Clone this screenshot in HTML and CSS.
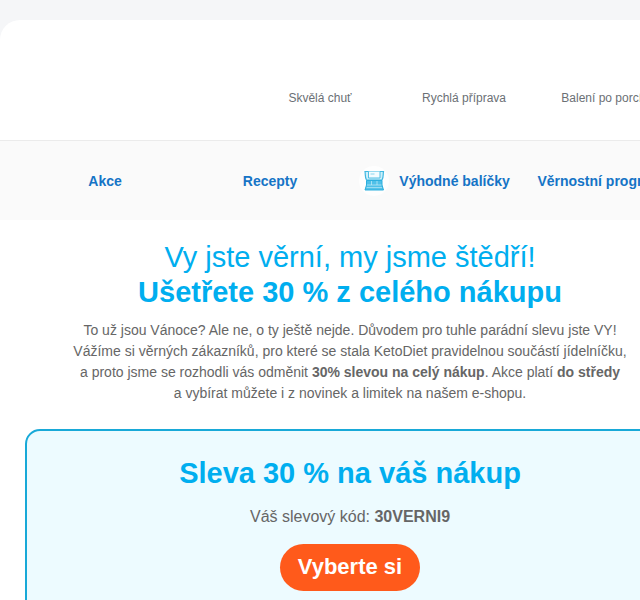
FILE: index.html
```html
<!DOCTYPE html>
<html lang="cs">
<head>
<meta charset="utf-8">
<title>KetoDiet</title>
<link rel="stylesheet" href="styles.css">
</head>
<body>
<div class="mail">
  <header class="header">
    <ul class="benefits">
      <li>Skvělá chuť</li>
      <li>Rychlá příprava</li>
      <li>Balení po porcích</li>
    </ul>
  </header>
  <nav class="nav">
    <a>Akce</a>
    <a>Recepty</a>
    <a class="packages">
      <svg class="icon" viewBox="0 0 30 30" width="30" height="30" aria-hidden="true">
        <circle cx="15" cy="15" r="15" fill="#fefefe"/>
        <path d="M6 5.500h18.500c-.6 3 .3 5.500-1.500 8.500H7.500C5.700 11 6.600 8.500 6 5.500z" fill="#cdeffa" stroke="#3fb8e1" stroke-width="1.200"/>
        <path d="M9.500 5.500v6.500h11.500v-6.500" fill="#f3fcff" stroke="#4fbfe4"/>
        <path d="M11.500 8h4" fill="none" stroke="#8ad6ee"/>
        <path d="M7.500 14.500H23V19l1.500 5H6l1.500-5z" fill="#4fc0e8" stroke="#2cafde"/>
        <path d="M8 19H22.500M7.500 21.600h15.500M12.500 15v4M18 15v4" fill="none" stroke="#c5ecf8" stroke-width=".7"/>
      </svg>
      <span>Výhodné balíčky</span>
    </a>
    <a>Věrnostní program</a>
  </nav>
  <main>
    <section class="intro">
      <h1>Vy jste věrní, my jsme štědří!<br><strong>Ušetřete 30 % z celého nákupu</strong></h1>
      <p>To už jsou Vánoce? Ale ne, o ty ještě nejde. Důvodem pro tuhle parádní slevu jste VY!<br>
      Vážíme si věrných zákazníků, pro které se stala KetoDiet pravidelnou součástí jídelníčku,<br>
      a proto jsme se rozhodli vás odměnit <strong>30% slevou na celý nákup</strong>. Akce platí <strong>do středy</strong><br>
      a vybírat můžete i z novinek a limitek na našem e-shopu.</p>
    </section>
    <section class="coupon">
      <h2>Sleva 30 % na váš nákup</h2>
      <p>Váš slevový kód: <strong>30VERNI9</strong></p>
      <a class="button">Vyberte si</a>
    </section>
  </main>
</div>
</body>
</html>
```
FILE: styles.css
```css
* { box-sizing: border-box; }
html { overflow: hidden; }
body {
  margin: 0;
  padding-top: 20px;
  height: 600px;
  overflow: hidden;
  background: #f5f6f8;
  font-family: "Liberation Sans", Arial, sans-serif;
  color: #666;
}
h1, h2, p, ul { margin: 0; padding: 0; }
.mail {
  width: 700px;
  height: 580px;
  background: #fff;
  border-radius: 20px 0 0 0;
  white-space: nowrap;
  overflow: hidden;
}
.header {
  height: 121px;
  padding: 70px 20px 0 248px;
  border-bottom: 1px solid #ebebeb;
}
.benefits {
  display: grid;
  grid-template-columns: repeat(3, 144px);
  list-style: none;
  text-align: center;
  font-size: 12px;
  line-height: 16px;
  color: #6b7075;
}
.nav {
  display: grid;
  grid-template-columns: 160px 170px 180px 130px;
  align-items: center;
  height: 79px;
  padding: 0 25px;
  background: #fafafa;
  text-align: center;
  font-size: 14px;
  font-weight: bold;
  color: #1574c6;
}
.packages {
  display: flex;
  align-items: center;
  gap: 10.3px;
  padding-left: 4px;
}
.intro { padding-top: 20px; text-align: center; }
.intro h1 {
  font-size: 29px;
  line-height: 35px;
  font-weight: normal;
  color: #00aeef;
}
.intro p {
  margin-top: 10px;
  font-size: 14px;
  line-height: 21px;
}
.coupon {
  height: 220px;
  margin: 25px 25px 0;
  padding-top: 25px;
  border: 2px solid #18a9d8;
  border-radius: 15px;
  background: #edfbff;
  text-align: center;
}
.coupon h2 {
  font-size: 29px;
  line-height: 35px;
  color: #00aeef;
}
.coupon p {
  margin: 14px 0 15px;
  font-size: 16px;
  line-height: 24px;
}
.button {
  display: inline-block;
  width: 140px;
  height: 47px;
  border-radius: 24px;
  background: #ff5a1b;
  font-size: 22px;
  line-height: 45px;
  font-weight: bold;
  color: #fff;
}
```
